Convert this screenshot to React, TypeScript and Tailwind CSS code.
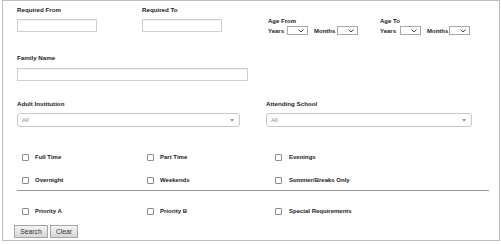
import type { ReactNode } from "react";

const font = { fontFamily: '"Liberation Sans", Arial, sans-serif' };

function Label({ children }: { children: ReactNode }) {
  return <div className="text-[6.2px] font-bold leading-[8px] text-[#222]">{children}</div>;
}

function TextBox({ width }: { width: string }) {
  return <div className={`${width} mt-[5px] h-[13px] border border-[#cfcfcf] bg-white shadow-[inset_0_1px_1px_rgba(0,0,0,0.06)]`} />;
}

function MiniSelect() {
  return (
    <div className="flex h-[9px] w-[21px] items-center justify-end border border-[#a9a9a9] bg-white pr-[3px]">
      <svg width="6" height="4" viewBox="0 0 6 4">
        <path d="M0.5 0.5 L3 3 L5.5 0.5" fill="none" stroke="#333" strokeWidth="0.9" />
      </svg>
    </div>
  );
}

function AgeGroup({ title, yearsW, monthsW }: { title: string; yearsW: string; monthsW: string }) {
  return (
    <div className="w-[112px]">
      <div className="mt-[16px] text-[6px] font-bold leading-[8px] text-[#222]">{title}</div>
      <div className="mt-[1px] flex items-center">
        <span className={`${yearsW} text-[6px] font-bold leading-[8px] text-[#222]`}>Years</span>
        <MiniSelect />
        <span className={`${monthsW} ml-[6px] text-[6px] font-bold leading-[8px] text-[#222]`}>Months</span>
        <MiniSelect />
      </div>
    </div>
  );
}

function DropDown({ width }: { width: string }) {
  return (
    <div className={`${width} mt-[5px] flex h-[14px] items-center justify-between rounded-[3px] border border-[#c8c8c8] bg-white pl-[4px] pr-[5px]`}>
      <span className="text-[6px] leading-[8px] text-[#888]">All</span>
      <svg width="4" height="3" viewBox="0 0 4 3">
        <path d="M0 0 L4 0 L2 3 Z" fill="#999" />
      </svg>
    </div>
  );
}

function Check({ label, width, gap = "ml-[6px]" }: { label: string; width: string; gap?: string }) {
  return (
    <div className={`${width} flex items-center pl-[5px]`}>
      <span className="h-[7px] w-[7px] rounded-[1px] border border-[#8c8c8c] bg-white" />
      <span className={`${gap} text-[6px] font-bold leading-[8px] text-[#222]`}>{label}</span>
    </div>
  );
}

function Button({ children, width }: { children: ReactNode; width: string }) {
  return (
    <button
      type="button"
      className={`${width} flex h-[13px] items-center justify-center border border-[#a5a5a5] bg-gradient-to-b from-[#f4f4f4] to-[#d6d6d6] text-[6.8px] leading-[8px] text-[#333]`}
    >
      {children}
    </button>
  );
}

export default function App() {
  return (
    <div className="h-[244px] w-[501px] bg-white" style={font}>
      <div className="ml-[2px] h-[241px] w-[498px] border border-[#bdbdbd] pl-[14px]">
        <div className="flex h-[35px]">
          <div className="w-[125px]">
            <div className="mt-[5px]">
              <Label>Required From</Label>
            </div>
            <TextBox width="w-[80px]" />
          </div>
          <div className="w-[126px]">
            <div className="mt-[5px]">
              <Label>Required To</Label>
            </div>
            <TextBox width="w-[80px]" />
          </div>
          <AgeGroup title="Age From" yearsW="w-[19px]" monthsW="w-[23px]" />
          <AgeGroup title="Age To" yearsW="w-[20px]" monthsW="w-[22px]" />
        </div>

        <div className="mt-[18px]">
          <Label>Family Name</Label>
        </div>
        <div className="mt-[6px] h-[13px] w-[231px] border border-[#cfcfcf] bg-white shadow-[inset_0_1px_1px_rgba(0,0,0,0.06)]" />

        <div className="mt-[19px] flex">
          <div className="w-[249px]">
            <Label>Adult Institution</Label>
            <DropDown width="w-[223px]" />
          </div>
          <div>
            <Label>Attending School</Label>
            <DropDown width="w-[206px]" />
          </div>
        </div>

        <div className="mt-[20px] flex flex-col gap-[3px]">
          <div className="flex h-[20px]">
            <Check label="Full Time" width="w-[125px]" />
            <Check label="Part Time" width="w-[128px]" />
            <Check label="Evenings" width="w-[150px]" gap="ml-[7px]" />
          </div>
          <div className="flex h-[20px]">
            <Check label="Overnight" width="w-[125px]" />
            <Check label="Weekends" width="w-[128px]" />
            <Check label="Summer/Breaks Only" width="w-[150px]" gap="ml-[7px]" />
          </div>
        </div>
        <div className="w-[472px] border-t border-[#9a9a9a]" />

        <div className="mt-[10px] flex h-[20px]">
          <Check label="Priority A" width="w-[125px]" />
          <Check label="Priority B" width="w-[128px]" />
          <Check label="Special Requirements" width="w-[150px]" gap="ml-[7px]" />
        </div>

        <div className="-ml-[3px] mt-[4px] flex gap-[2px]">
          <Button width="w-[34px]">Search</Button>
          <Button width="w-[28px]">Clear</Button>
        </div>
      </div>
    </div>
  );
}
